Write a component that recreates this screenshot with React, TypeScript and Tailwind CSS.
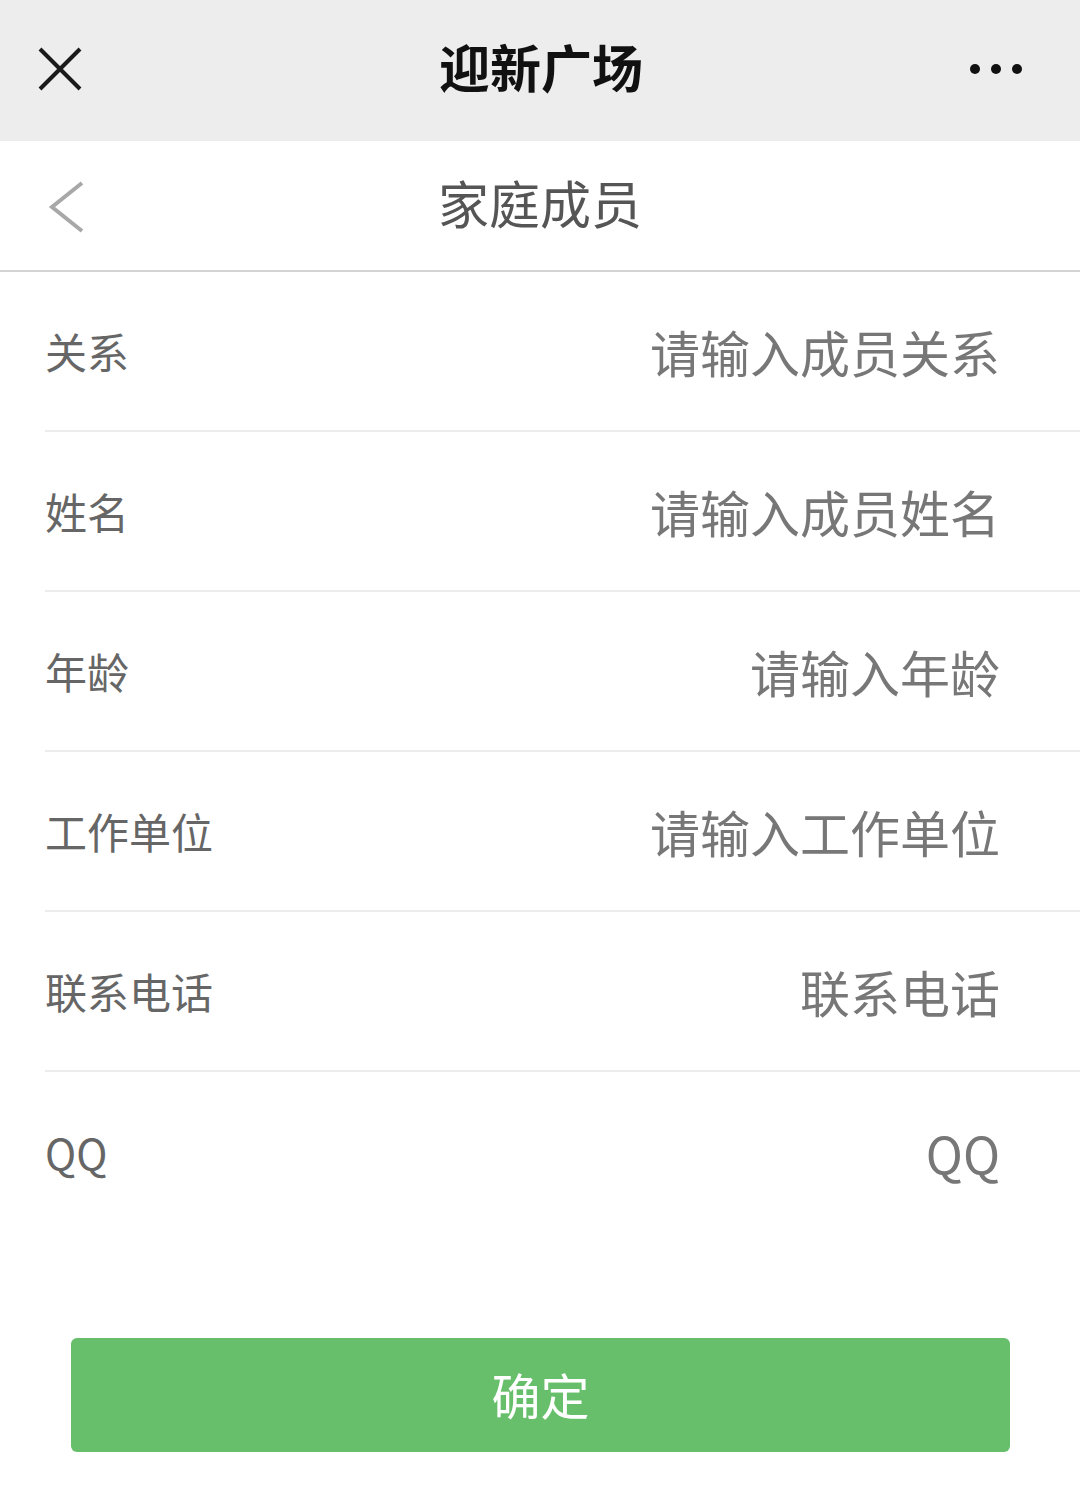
import React from "react";

const rows: [string, string][] = [
  ["关系", "请输入成员关系"],
  ["姓名", "请输入成员姓名"],
  ["年龄", "请输入年龄"],
  ["工作单位", "请输入工作单位"],
  ["联系电话", "联系电话"],
  ["QQ", "QQ"],
];

export default function App() {
  return (
    <div
      className="w-[1080px] h-[1511px] bg-white flex flex-col"
      style={{ fontFamily: '"Noto Sans CJK SC", "Noto Sans", sans-serif' }}
    >
      <div className="h-[141px] bg-[#ededed] grid grid-cols-[1fr_auto_1fr] items-center px-[38px]">
        <svg width="44" height="44" viewBox="0 0 44 44" className="mt-[-4px]">
          <path d="M2 2 L42 42 M42 2 L2 42" stroke="#1a1a1a" strokeWidth="4" fill="none" />
        </svg>
        <div className="text-[51px] font-bold text-[#111] leading-none mt-[-8px] ml-[2px]">迎新广场</div>
        <div className="flex justify-end gap-[11px] mr-[20px] mt-[-4px]">
          <span className="w-[10px] h-[10px] rounded-full bg-[#111]" />
          <span className="w-[10px] h-[10px] rounded-full bg-[#111]" />
          <span className="w-[10px] h-[10px] rounded-full bg-[#111]" />
        </div>
      </div>
      <div className="h-[131px] flex items-center relative border-b-2 border-[#d4d4d4]">
        <svg width="40" height="56" viewBox="0 0 40 56" className="absolute left-[46px] top-[38px]">
          <path d="M36 4 L6 28 L36 52" stroke="#a8a8a8" strokeWidth="4" fill="none" />
        </svg>
        <div className="w-full text-center text-[51px] text-[#555] leading-none mt-[-6px]">家庭成员</div>
      </div>
      <div className="flex flex-col pl-[45px]">
        {rows.map(([label, ph], i) => (
          <div
            key={label}
            className={
              "h-[160px] flex items-center justify-between pr-[80px] " +
              (i < rows.length - 1 ? "border-b-2 border-[#ececec]" : "")
            }
          >
            <span className="text-[42px] text-[#666] leading-none">{label}</span>
            <span className="text-[50px] text-[#777] leading-none">{ph}</span>
          </div>
        ))}
      </div>
      <div className="px-[71px] pt-[106px]">
        <div className="h-[114px] w-[939px] rounded-[6px] bg-[#67bf6b] flex items-center justify-center">
          <span className="text-[49px] text-white leading-none mt-[-4px]">确定</span>
        </div>
      </div>
    </div>
  );
}
